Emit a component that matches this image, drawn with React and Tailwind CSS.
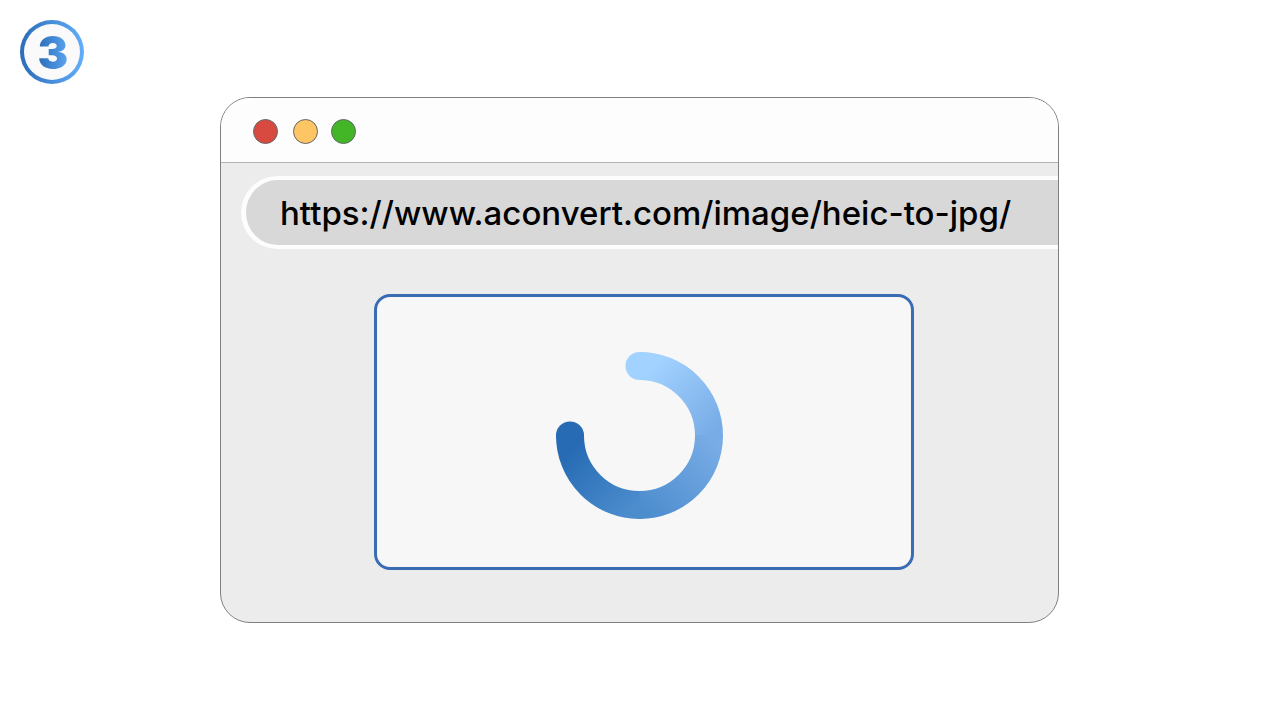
import { useState } from 'react';

const lights = [
  { name: 'Close', className: 'bg-[#d84a3f]' },
  { name: 'Minimize', className: 'ml-[15px] bg-[#fdc564]' },
  { name: 'Zoom', className: 'ml-[13px] bg-[#42b627]' },
];

function StepBadge({ step }) {
  return (
    <div className="size-16 rounded-full bg-linear-to-r from-[#2a6db8] to-[#63aefb] p-1">
      <div className="flex size-full items-center justify-center rounded-full bg-[#fafafa] pl-0.5">
        <span className="bg-linear-to-r from-[#2a6db8] to-[#5ba5f2] bg-clip-text text-[46px] leading-[56px] font-black text-transparent">
          {step}
        </span>
      </div>
    </div>
  );
}

function Spinner() {
  return (
    <svg
      role="status"
      aria-label="Loading"
      viewBox="0 0 167 167"
      className="h-[167px] w-[167px]"
      fill="none"
      strokeWidth="28"
    >
      <defs>
        <linearGradient id="light" gradientUnits="userSpaceOnUse" x1="83" y1="14" x2="153" y2="84">
          <stop offset="0.1" stopColor="#a2d2ff" />
          <stop offset="1" stopColor="#78ace6" />
        </linearGradient>
        <linearGradient id="mid" gradientUnits="userSpaceOnUse" x1="153" y1="84" x2="83" y2="153">
          <stop offset="0" stopColor="#78ace6" />
          <stop offset="1" stopColor="#4d8dce" />
        </linearGradient>
        <linearGradient id="dark" gradientUnits="userSpaceOnUse" x1="83" y1="153" x2="14" y2="84">
          <stop offset="0" stopColor="#4d8dce" />
          <stop offset="0.9" stopColor="#266bb3" />
        </linearGradient>
      </defs>
      {/* round ends */}
      <circle cx="83.5" cy="14" r="14" fill="#a2d2ff" />
      <circle cx="14" cy="83.5" r="14" fill="#266bb3" />
      <path d="M83.5 14A69.5 69.5 0 0 1 153 83.5" stroke="url(#light)" />
      <path d="M153 83A69.5 69.5 0 0 1 83 153" stroke="url(#mid)" />
      <path d="M84 153A69.5 69.5 0 0 1 14 83.5" stroke="url(#dark)" />
    </svg>
  );
}

export default function App() {
  const [url, setUrl] = useState('https://www.aconvert.com/image/heic-to-jpg/');

  return (
    <main className="min-h-screen bg-white font-['Inter',sans-serif]">
      <div className="px-5 pt-5 pb-[13px]">
        <StepBadge step={3} />
      </div>

      <section className="mx-auto w-full max-w-[839px] overflow-hidden rounded-[30px] border border-[#808080] bg-[#ececec]">
        <div className="flex h-[65px] items-center border-b border-[#b4b4b4] bg-[#fdfdfd] pt-0.5 pl-8">
          {lights.map((light) => (
            <button
              key={light.name}
              type="button"
              aria-label={light.name}
              className={`size-[25px] rounded-full border border-[#666] ${light.className}`}
            />
          ))}
        </div>

        <div className="pt-[13px] pb-[52px]">
          <div className="pl-5">
            <input
              type="text"
              aria-label="Address"
              value={url}
              onChange={(e) => setUrl(e.target.value)}
              className="block h-[73px] w-full rounded-l-full border-4 border-r-0 border-l-5 border-[#fdfdfd] bg-[#d8d8d8] pl-[34px] text-[33px] font-medium text-black outline-none"
            />
          </div>

          <div className="mt-[45px] mr-[144px] ml-[153px] flex h-[276px] items-center justify-center rounded-2xl border-3 border-[#3a6cb4] bg-[#f7f7f7] pt-[6px] pr-[9px]">
            <Spinner />
          </div>
        </div>
      </section>
    </main>
  );
}
